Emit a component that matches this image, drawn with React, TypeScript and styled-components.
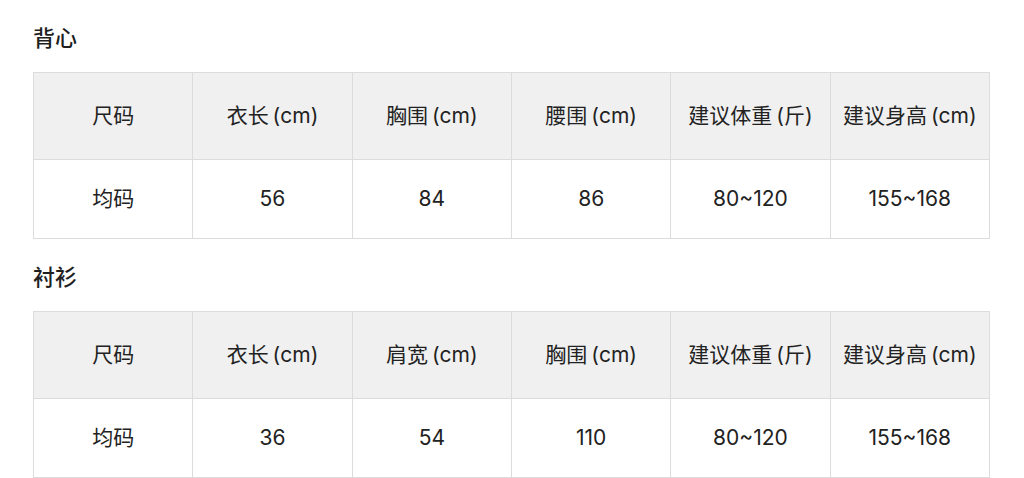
import React from "react";
import styled, { createGlobalStyle } from "styled-components";

const Global = createGlobalStyle`
  html, body { margin: 0; padding: 0; background: #ffffff; }
  body { font-family: Inter, "Noto Sans CJK SC", sans-serif; color: #222; }
`;

const Page = styled.div`
  padding: 26px 34px 0 33px;
  width: 957px;
`;

const Title = styled.h2`
  margin: 0 0 22px;
  font-size: 22px;
  line-height: 24px;
  font-weight: 500;
  color: #1f1f1f;
`;

const Section = styled.section`
  & + & { margin-top: 26px; }
`;

const Table = styled.table`
  width: 957px;
  border-collapse: collapse;
  table-layout: fixed;
`;

const Head = styled.th`
  height: 86px;
  background: #f0f0f0;
  border: 1px solid #dcdcdc;
  font-size: 21px;
  line-height: 26px;
  font-weight: 400;
  color: #222;
  text-align: center;
  padding: 0;
  white-space: nowrap;
  word-spacing: -2px;
`;

const Cell = styled.td`
  height: 78px;
  border: 1px solid #dcdcdc;
  font-size: 21px;
  line-height: 26px;
  color: #222;
  text-align: center;
  padding: 0;
`;

const data = [
  {
    title: "背心",
    head: ["尺码", "衣长 (cm)", "胸围 (cm)", "腰围 (cm)", "建议体重 (斤)", "建议身高 (cm)"],
    row: ["均码", "56", "84", "86", "80~120", "155~168"],
  },
  {
    title: "衬衫",
    head: ["尺码", "衣长 (cm)", "肩宽 (cm)", "胸围 (cm)", "建议体重 (斤)", "建议身高 (cm)"],
    row: ["均码", "36", "54", "110", "80~120", "155~168"],
  },
];

export default function App() {
  return (
    <>
      <Global />
      <Page>
        {data.map((t) => (
          <Section key={t.title}>
            <Title>{t.title}</Title>
            <Table>
              <thead>
                <tr>
                  {t.head.map((h) => (
                    <Head key={h}>{h}</Head>
                  ))}
                </tr>
              </thead>
              <tbody>
                <tr>
                  {t.row.map((c, i) => (
                    <Cell key={i}>{c}</Cell>
                  ))}
                </tr>
              </tbody>
            </Table>
          </Section>
        ))}
      </Page>
    </>
  );
}
